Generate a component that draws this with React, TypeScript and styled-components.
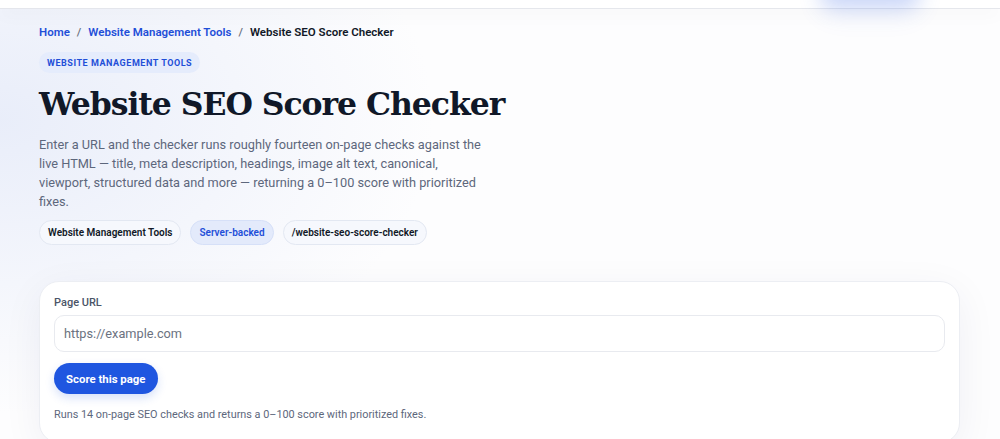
import React from "react";
import styled, { createGlobalStyle } from "styled-components";

const GlobalStyle = createGlobalStyle`
  html, body { margin: 0; padding: 0; }
  body {
    font-family: Roboto, Inter, "Noto Sans", sans-serif;
    background: #fff;
    -webkit-font-smoothing: antialiased;
  }
  * { box-sizing: border-box; }
`;

const Page = styled.div`
  width: 1000px;
  height: 439px;
  overflow: hidden;
  position: relative;
  background:
    radial-gradient(ellipse 620px 420px at 0px 120px, rgba(226, 232, 248, 0.75), rgba(255,255,255,0) 70%),
    #fdfdfe;
`;

const Header = styled.header`
  position: relative;
  height: 8px;
  background: #ffffff;
  box-shadow: 0 1px 0 rgba(226, 228, 234, 0.9), 0 6px 18px rgba(15, 23, 42, 0.04);
  z-index: 2;
`;

const HeaderGlow = styled.div`
  position: absolute;
  left: 820px;
  top: -22px;
  width: 100px;
  height: 30px;
  border-radius: 999px;
  background: #2f5fe4;
  box-shadow: 0 8px 18px rgba(47, 95, 228, 0.28);
  opacity: 0.25;
  filter: blur(10px);
`;

const Main = styled.main`
  padding: 15px 40px 0 39px;
  display: flex;
  flex-direction: column;
`;

const Crumbs = styled.nav`
  display: flex;
  align-items: center;
  gap: 7px;
  font-size: 11.5px;
  font-weight: 600;
  line-height: 18px;
`;

const CrumbLink = styled.a`
  color: #1f4fd8;
  text-decoration: none;
`;

const CrumbSep = styled.span`
  color: #6b7280;
  font-weight: 500;
`;

const CrumbCurrent = styled.span`
  color: #111827;
`;

const Eyebrow = styled.span`
  align-self: flex-start;
  margin-top: 11px;
  padding: 0 8px;
  height: 21px;
  display: inline-flex;
  align-items: center;
  border-radius: 999px;
  background: #e5ecfc;
  color: #1f4fd8;
  font-size: 9px;
  font-weight: 700;
  letter-spacing: 0.55px;
  text-transform: uppercase;
`;

const Title = styled.h1`
  margin: 10px 0 0;
  font-family: "DejaVu Serif", "Liberation Serif", serif;
  font-weight: 700;
  font-size: 31.5px;
  line-height: 42px;
  letter-spacing: -1.05px;
  color: #101828;
`;

const Lead = styled.p`
  margin: 10px 0 0;
  max-width: 450px;
  font-size: 12.75px;
  line-height: 19px;
  color: #5d677c;
`;

const Chips = styled.div`
  display: flex;
  gap: 9px;
  margin-top: 9px;
`;

const Chip = styled.span<{ $accent?: boolean }>`
  height: 25px;
  padding: 0 8px;
  display: inline-flex;
  align-items: center;
  border-radius: 999px;
  border: 1px solid ${(p) => (p.$accent ? "#d6e0f8" : "#e3e8f2")};
  background: ${(p) => (p.$accent ? "#e3eafb" : "#f6f8fd")};
  color: ${(p) => (p.$accent ? "#1f4fd8" : "#111827")};
  font-size: 10px;
  font-weight: 600;
`;

const Card = styled.section`
  margin-top: 36px;
  width: 921px;
  border: 1px solid #eceef3;
  border-radius: 20px;
  background: #ffffff;
  box-shadow: 0 10px 40px rgba(30, 41, 80, 0.06);
  padding: 14px 14px 20px 14px;
  display: flex;
  flex-direction: column;
`;

const Label = styled.label`
  font-size: 11px;
  font-weight: 500;
  color: #4b5568;
  line-height: 14px;
`;

const Input = styled.input`
  margin-top: 5px;
  height: 37px;
  border: 1px solid #e8eaef;
  border-radius: 10px;
  padding: 0 9px;
  font-family: inherit;
  font-size: 12.75px;
  color: #111827;
  background: #fff;
  outline: none;
  &::placeholder { color: #6b7280; }
`;

const Button = styled.button`
  margin-top: 11px;
  align-self: flex-start;
  height: 31px;
  padding: 0 12px;
  border: none;
  border-radius: 999px;
  background: #1f56e0;
  color: #fff;
  font-family: inherit;
  font-size: 11.4px;
  font-weight: 700;
  box-shadow: 0 4px 10px rgba(31, 86, 224, 0.18);
`;

const Note = styled.p`
  margin: 14px 0 0;
  font-size: 10.85px;
  line-height: 14px;
  color: #5d677c;
`;

export default function App() {
  return (
    <>
      <GlobalStyle />
      <Page>
        <Header>
          <HeaderGlow />
        </Header>
        <Main>
          <Crumbs>
            <CrumbLink href="#">Home</CrumbLink>
            <CrumbSep>/</CrumbSep>
            <CrumbLink href="#">Website Management Tools</CrumbLink>
            <CrumbSep>/</CrumbSep>
            <CrumbCurrent>Website SEO Score Checker</CrumbCurrent>
          </Crumbs>
          <Eyebrow>Website Management Tools</Eyebrow>
          <Title>Website SEO Score Checker</Title>
          <Lead>
            Enter a URL and the checker runs roughly fourteen on-page checks against the live HTML — title,
            meta description, headings, image alt text, canonical, viewport, structured data and more —
            returning a 0–100 score with prioritized fixes.
          </Lead>
          <Chips>
            <Chip>Website Management Tools</Chip>
            <Chip $accent>Server-backed</Chip>
            <Chip>/website-seo-score-checker</Chip>
          </Chips>
          <Card>
            <Label htmlFor="url">Page URL</Label>
            <Input id="url" placeholder="https://example.com" />
            <Button>Score this page</Button>
            <Note>Runs 14 on-page SEO checks and returns a 0–100 score with prioritized fixes.</Note>
          </Card>
        </Main>
      </Page>
    </>
  );
}
